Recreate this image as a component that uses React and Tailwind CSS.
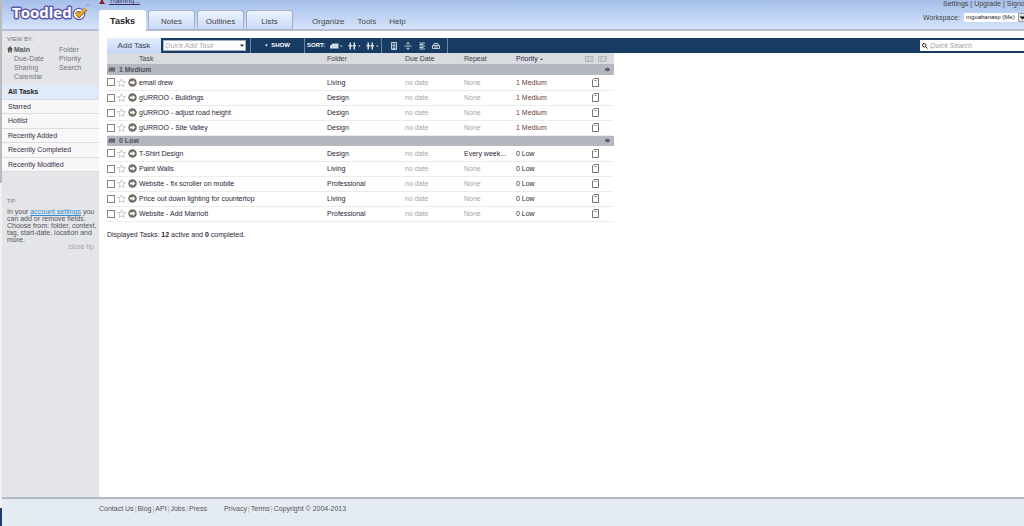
import React from 'react';

const TABS = ['Notes', 'Outlines', 'Lists'];
const MENU = ['Organize', 'Tools', 'Help'];
const VIEWS = [
  ['Main', 'Folder'],
  ['Due-Date', 'Priority'],
  ['Sharing', 'Search'],
  ['Calendar', null],
];
const LISTS = ['All Tasks', 'Starred', 'Hotlist', 'Recently Added', 'Recently Completed', 'Recently Modified'];

const GROUPS = [
  {
    title: '1 Medium',
    tasks: [
      { name: 'email drew', folder: 'Living', repeat: 'None' },
      { name: 'gURROO - Buildings', folder: 'Design', repeat: 'None' },
      { name: 'gURROO - adjust road height', folder: 'Design', repeat: 'None' },
      { name: 'gURROO - Site Valley', folder: 'Design', repeat: 'None' },
    ],
  },
  {
    title: '0 Low',
    tasks: [
      { name: 'T-Shirt Design', folder: 'Design', repeat: 'Every week...' },
      { name: 'Paint Walls', folder: 'Living', repeat: 'None' },
      { name: 'Website - fix scroller on mobile', folder: 'Professional', repeat: 'None' },
      { name: 'Price out down lighting for countertop', folder: 'Living', repeat: 'None' },
      { name: 'Website - Add Marriott', folder: 'Professional', repeat: 'None' },
    ],
  },
];

const Logo = () => (
  <svg width="82" height="24" viewBox="0 0 82 24" role="img" aria-label="Toodledo">
    <text
      x="3"
      y="18"
      fontFamily="'Open Sans', sans-serif"
      fontWeight="700"
      fontSize="15"
      fill="#fff"
      stroke="#5f5cae"
      strokeWidth="3"
      strokeLinejoin="round"
      paintOrder="stroke"
    >
      Toodled
    </text>
    <circle cx="70" cy="14" r="4" fill="none" stroke="#5f5cae" strokeWidth="4.5" />
    <circle cx="70" cy="14" r="4" fill="none" stroke="#fff" strokeWidth="2.2" />
    <path d="M67 12l3 4 7-7" fill="none" stroke="#9a6a10" strokeWidth="3.6" />
    <path d="M67 12l3 3.500 7-7" fill="none" stroke="#e9b02e" strokeWidth="2.4" />
    <circle cx="79" cy="5" r="1" fill="none" stroke="#8a90c8" strokeWidth="0.6" />
  </svg>
);

const StarIcon = () => (
  <svg width="9" height="9" viewBox="0 0 18 18" fill="#fff" stroke="#b4b4b0" strokeWidth="1.5">
    <path d="M9 1.5l2.2 5.4 5.8.4-4.4 3.8 1.4 5.7L9 13.7l-5 3.1 1.4-5.7L1 7.3l5.8-.4z" />
  </svg>
);

const ArrowIcon = () => (
  <svg width="9" height="9" viewBox="0 0 18 18">
    <circle cx="9" cy="9" r="8.5" fill="#6e6e64" />
    <path d="M3.5 7h6V4l5 5-5 5v-3h-6z" fill="#fff" />
  </svg>
);

const NoteIcon = () => (
  <svg width="7" height="9" viewBox="0 0 14 18" fill="#fff" stroke="#77776c" strokeWidth="2">
    <path d="M4 1h9v16H1V4z" />
    <path d="M5 5h4" />
  </svg>
);

const FolderIcon = () => (
  <svg width="7" height="5" viewBox="0 0 14 10">
    <path d="M0 9L3 1h11v8z" fill="#5c6068" />
    <path d="M3 6h9" stroke="#92969d" strokeWidth="1" />
  </svg>
);

const SortIcon = ({ kind }) => (
  <svg width="13" height="8" viewBox="0 0 26 16" fill="#d3dce6">
    {kind === 'first' ? (
      <path d="M0 13V8l5-5h12v10z" />
    ) : (
      <path d="M3 1h3v5h2v3H6v6H3V9H1V6h2zM11 1h3v5h2v3h-2v6h-3V9H9V6h2z" />
    )}
    <path d="M20 7h5l-2.500 3z" />
  </svg>
);

const TOOLS = [
  {
    label: 'Notes view',
    art: <path d="M3 1h10v14H3zM5 4h6M5 7h6M5 10h6M5 13h6" />,
  },
  {
    label: 'Expand',
    art: <path d="M1 8h14M8 1v4M8 11v4M5 4l3-3 3 3M5 12l3 3 3-3" />,
  },
  {
    label: 'Multi-line',
    art: <path d="M3 2h11M3 5h8M3 8h11M3 11h8M3 14h11" />,
  },
  {
    label: 'Print',
    art: <path d="M4 7V3h8v4M1 7h14v6H1zM4 10h8" />,
  },
];

const TaskRow = ({ task, priority }) => (
  <tr className="h-[15px] border-b border-[#ececec]">
    <td>
      <div className="flex items-center">
        <input
          type="checkbox"
          aria-label={task.name}
          className="size-2 appearance-none border border-[#85857c] bg-white"
        />
        <button aria-label="Star" className="ml-[2px]">
          <StarIcon />
        </button>
        <button aria-label="Actions" className="ml-[2px]">
          <ArrowIcon />
        </button>
        <span className="ml-[2px] whitespace-nowrap">{task.name}</span>
      </div>
    </td>
    <td>{task.folder}</td>
    <td className="text-[#a5a5a5]">no date</td>
    <td className={task.repeat === 'None' ? 'text-[#a5a5a5]' : 'whitespace-nowrap'}>{task.repeat}</td>
    <td className={priority === '1 Medium' ? 'text-[#6b3a3a]' : ''}>{priority}</td>
    <td>
      <button aria-label="Note" className="ml-[3px] block">
        <NoteIcon />
      </button>
    </td>
  </tr>
);

const TaskTable = () => (
  <table className="w-[507px] table-fixed border-collapse text-left text-[#2c1c38]">
    <colgroup>
      <col />
      <col className="w-[78px]" />
      <col className="w-[59px]" />
      <col className="w-[52px]" />
      <col className="w-[73px]" />
      <col className="w-[25px]" />
    </colgroup>
    <thead>
      <tr className="h-[11px] bg-[#d8dbe0] text-[#444]">
        <th className="pl-8 font-normal">Task</th>
        <th className="font-normal">Folder</th>
        <th className="font-normal">Due Date</th>
        <th className="font-normal">Repeat</th>
        <th className="font-normal text-[#33204a]">
          <span className="flex items-center gap-[2px]">
            Priority
            <svg width="3" height="2" viewBox="0 0 6 4" fill="#555">
              <path d="M0 4l3-4 3 4z" />
            </svg>
          </span>
        </th>
        <th>
          <svg width="24" height="6" viewBox="0 0 48 12" fill="none" stroke="#a3a6ab" strokeWidth="1.500" className="-ml-1">
            <path d="M1 1h15v10H1zM4 4h5M4 8h5M11 4h3M11 8h3M27 1h15v10H27zM30 4h5M30 8h5M38 8l7-7" />
          </svg>
        </th>
      </tr>
    </thead>
    {GROUPS.map((group) => (
      <tbody key={group.title}>
        <tr className="h-[11px] bg-[#b3b7be]">
          <th colSpan={6}>
            <div className="flex items-center pr-1 pl-px text-[#4c4f56]">
              <FolderIcon />
              <span className="ml-1">{group.title}</span>
              <svg width="5" height="5" viewBox="0 0 10 10" fill="#4c4f56" className="ml-auto">
                <path d="M0 3h5V0l5 5-5 5V7H0z" />
              </svg>
            </div>
          </th>
        </tr>
        {group.tasks.map((task) => (
          <TaskRow key={task.name} task={task} priority={group.title} />
        ))}
      </tbody>
    ))}
  </table>
);

const Sidebar = () => (
  <aside className="w-[97px] shrink-0 bg-[#e3e5e9] text-[#777]">
    <div className="h-[54px] px-[5px] pt-1">
      <h2 className="text-[6px] leading-[9px]">VIEW BY:</h2>
      <ul className="mt-px">
        {VIEWS.map(([left, right]) => (
          <li key={left} className="flex leading-[9px]">
            <a href="#" className="flex w-[52px] items-center">
              <span className="w-[7px]">
                {left === 'Main' && (
                  <svg width="6" height="7" viewBox="0 0 12 14" fill="#555">
                    <path d="M6 0l6 7h-2v6H7V9H5v4H2V7H0z" />
                  </svg>
                )}
              </span>
              <span className={left === 'Main' ? 'font-bold text-[#555]' : ''}>{left}</span>
            </a>
            {right && <a href="#">{right}</a>}
          </li>
        ))}
      </ul>
    </div>
    <nav className="grid h-[87px] grid-rows-6">
      {LISTS.map((item, i) => (
        <a
          key={item}
          href="#"
          className={`flex items-center border-b border-[#dcdcde] pl-[6px] ${
            i === 0 ? 'bg-[#e1eafa] font-bold text-[#222]' : 'bg-[#f8f8f9] text-[#3c2c48]'
          }`}
        >
          {item}
        </a>
      ))}
    </nav>
    <div className="mt-[26px] px-[5px] leading-[7px]">
      <h2 className="text-[5px]">TIP:</h2>
      <p className="mt-[3px] whitespace-nowrap text-[#555]">
        In your{' '}
        <a href="#" className="text-[#2f8bd0] underline">
          account settings
        </a>{' '}
        you
        <br />
        can add or remove fields.
        <br />
        Choose from: folder, context,
        <br />
        tag, start-date, location and
        <br />
        more.
      </p>
      <button className="ml-auto block text-[#a8a8a8]">close tip</button>
    </div>
  </aside>
);

const Header = () => (
  <header className="flex h-[31px] border-b-2 border-[#b3bfd0] bg-linear-to-b from-[#a5bfe9] to-[#d5e3fb]">
    <a href="#" className="w-[97px] shrink-0 pl-[7px]">
      <Logo />
    </a>
    <div className="flex min-w-0 flex-1 flex-col justify-between">
      <a href="#" className="-mt-[3px] flex h-2 items-center gap-1 leading-2 text-[#3b2c60] underline">
        <svg width="6" height="6" viewBox="0 0 6 6" fill="#8b1a2b">
          <path d="M2 0h2v3l2 3H0l2-3z" />
        </svg>
        Training...
      </a>
      <nav className="-mb-[2px] flex items-end">
        <a
          href="#"
          className="flex h-[21px] w-[47px] items-center justify-center rounded-t-[3px] bg-white pt-[2px] text-[9px] font-bold text-[#222]"
        >
          Tasks
        </a>
        {TABS.map((tab) => (
          <a
            key={tab}
            href="#"
            className="mb-[2px] ml-[2px] flex h-[19px] w-[47px] items-center justify-center rounded-t-[3px] border border-b-0 border-[#9fb0cd] bg-linear-to-b from-[#eef4ff] to-[#c8d9f6] pt-[2px] text-[8px] text-[#444] shadow-xs"
          >
            {tab}
          </a>
        ))}
        <div className="mb-[2px] ml-[19px] flex h-[19px] items-center gap-[13px] pt-[4px] text-[8px] text-[#4a4a4a]">
          {MENU.map((item) => (
            <a key={item} href="#">
              {item}
            </a>
          ))}
        </div>
      </nav>
    </div>
    <div className="w-[101px] shrink-0 overflow-hidden text-[#444]">
      <div className="ml-5 flex gap-[2px] leading-[7px] whitespace-nowrap">
        <a href="#">Settings</a>|<a href="#">Upgrade</a>|<a href="#">Signout</a>
      </div>
      <label className="mt-[6px] flex w-[105px] items-center">
        <span className="w-[41px] shrink-0">Workspace:</span>
        <span className="flex flex-1 bg-white">
          <select className="h-[9px] w-[54px] appearance-none pl-[2px] text-[6px] leading-[9px] text-[#222]">
            <option>mguahanasp (Me)</option>
          </select>
          <svg width="10" height="9" viewBox="0 0 20 18">
            <path d="M1 1h18v16H1z" fill="#dde1e6" stroke="#9aa0a8" strokeWidth="2" />
            <path d="M3 7h12l-6 6z" fill="#111" />
          </svg>
        </span>
      </label>
    </div>
  </header>
);

const Toolbar = () => (
  <div className="flex h-[15px] items-stretch bg-[#173b63] text-white">
    <button className="w-[54px] bg-linear-to-b from-[#e4eefd] to-[#c3d6f5] text-[8px] text-[#3a4352]">Add Task</button>
    <div className="flex w-[90px] items-center border-r border-[#6f87a1] pl-[2px]">
      <div className="flex h-[11px] w-[83px] items-center border border-[#9fb0c4] bg-white">
        <input
          aria-label="Quick Add Task"
          placeholder="Quick Add Task"
          className="min-w-0 flex-1 pl-px text-[7px] leading-[9px] italic placeholder:text-[#a8a8a8]"
        />
        <svg width="4" height="3" viewBox="0 0 8 6" fill="#333" className="mr-px">
          <path d="M0 1h8L4 6z" />
        </svg>
      </div>
    </div>
    <button className="flex w-[54px] items-center justify-center gap-[3px] border-r border-[#6f87a1] text-[6px] font-bold">
      <svg width="3" height="3" viewBox="0 0 6 6" fill="#fff">
        <path d="M0 1h6L3 5z" />
      </svg>
      SHOW
    </button>
    <div className="flex w-[77px] items-center gap-[5px] border-r border-[#6f87a1] pl-[2px] text-[6px] font-bold">
      SORT:
      {['first', 'second', 'third'].map((kind) => (
        <button key={kind} aria-label={`Sort ${kind}`}>
          <SortIcon kind={kind} />
        </button>
      ))}
    </div>
    <div className="flex w-[66px] items-center justify-center gap-[6px] border-r border-[#6f87a1]">
      {TOOLS.map(({ label, art }) => (
        <button key={label} aria-label={label}>
          <svg width="8" height="8" viewBox="0 0 16 16" fill="none" stroke="#c3ced9" strokeWidth="2">
            {art}
          </svg>
        </button>
      ))}
    </div>
    <div className="ml-auto flex items-center">
      <div className="flex h-[11px] w-[104px] items-center bg-white pl-[2px]">
        <svg width="6" height="6" viewBox="0 0 12 12" fill="none" stroke="#222" strokeWidth="2">
          <circle cx="4.500" cy="4.500" r="3.500" />
          <path d="M7 7l4 4" />
        </svg>
        <input
          aria-label="Quick Search"
          placeholder="Quick Search"
          className="min-w-0 flex-1 pl-[2px] text-[7px] leading-[9px] italic placeholder:text-[#a0a0a0]"
        />
      </div>
    </div>
  </div>
);

const Footer = () => (
  <footer className="flex h-[29px] gap-[17px] border-t-2 border-[#b4bac1] bg-[#e5ebf3] pt-[5px] pl-[97px] leading-[10px] text-[#555]">
    {[
      ['Contact Us', 'Blog', 'API', 'Jobs', 'Press'],
      ['Privacy', 'Terms', 'Copyright © 2004-2013'],
    ].map((links) => (
      <div key={links[0]} className="flex gap-px">
        {links.map((link, i) => (
          <React.Fragment key={link}>
            {i > 0 && <span className="text-[#aaa]">|</span>}
            <a href="#">{link}</a>
          </React.Fragment>
        ))}
      </div>
    ))}
  </footer>
);

export default function App() {
  return (
    <div className="flex min-h-screen bg-white font-['Liberation_Sans',Arial,sans-serif] text-[7px] leading-[9px]">
      {/* Window edge */}
      <div className="flex w-[2px] shrink-0 flex-col bg-[#f1f1f1]">
        <div className="h-[183px] bg-[#b9bbbe]" />
        <div className="mt-auto h-[18px] bg-[#1c3f70]" />
      </div>
      <div className="flex min-w-0 flex-1 flex-col">
        <Header />
        <div className="flex flex-1">
          <Sidebar />
          <main className="min-w-0 flex-1 pt-[7px] pl-2">
            <Toolbar />
            <TaskTable />
            <p className="mt-2 text-[#2c1c38]">
              Displayed Tasks: <b>12</b> active and <b>0</b> completed.
            </p>
          </main>
        </div>
        <Footer />
      </div>
    </div>
  );
}
